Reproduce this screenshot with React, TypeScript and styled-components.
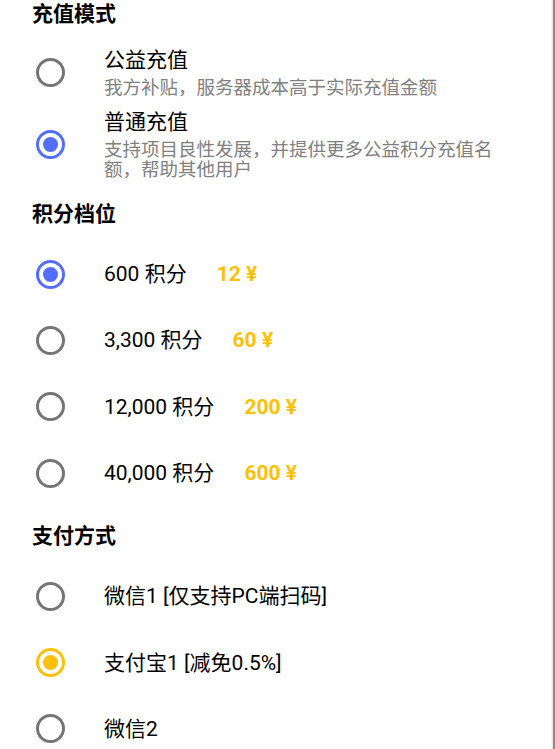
import React, { useState } from 'react';
import styled, { createGlobalStyle } from 'styled-components';

const COLORS = {
  TEXT: '#000000',
  SUB: '#808080',
  RADIO_OFF: '#757575',
  INDIGO: '#536dfe',
  AMBER: '#ffc107',
};

const GlobalStyle = createGlobalStyle`
  html, body {
    margin: 0;
    padding: 0;
    background: #ffffff;
  }
  body {
    font-family: Roboto, "Noto Sans CJK SC", sans-serif;
    color: ${COLORS.TEXT};
  }
`;

const Page = styled.div`
  box-sizing: border-box;
  width: 555px;
  min-height: 749px;
  padding: 0 0 0 32px;
  border-right: 2px solid #8c8c8c;
  box-shadow: inset -3px 0 2px -2px rgba(0, 0, 0, 0.12);
  overflow: hidden;
`;

const Section = styled.section`
  & + & {
    margin-top: 16px;
  }
`;

const Heading = styled.h2`
  margin: 0 0 13px;
  font-size: 21px;
  line-height: 28px;
  font-weight: 700;
`;

const ModeList = styled.div`
  display: flex;
  flex-direction: column;
  gap: 3px;
  padding: 2px 0 0;
`;

const Option = styled.label<{ $tall?: boolean }>`
  display: flex;
  align-items: center;
  gap: 36px;
  min-height: ${(p) => (p.$tall ? '66.3px' : '0')};
  padding: ${(p) => (p.$tall ? '0' : '4px 0')};
  cursor: pointer;
`;

const RadioBox = styled.span`
  flex: none;
  display: flex;
  align-items: center;
  justify-content: center;
  width: 36px;
  height: 36px;
`;

const RadioRing = styled.span<{ $checked: boolean; $color: string }>`
  position: relative;
  box-sizing: border-box;
  width: 29px;
  height: 29px;
  border-radius: 50%;
  border: 3px solid ${(p) => (p.$checked ? p.$color : COLORS.RADIO_OFF)};

  &::after {
    content: '';
    position: absolute;
    left: 4px;
    top: 4px;
    width: 15px;
    height: 15px;
    border-radius: 50%;
    background: ${(p) => p.$color};
    display: ${(p) => (p.$checked ? 'block' : 'none')};
  }
`;

const TextBlock = styled.div`
  display: flex;
  flex-direction: column;
  width: 400px;
`;

const Label = styled.span`
  font-size: 21px;
  line-height: 26px;
`;

const Sub = styled.span`
  margin-top: 5px;
  font-size: 18.5px;
  line-height: 20px;
  color: ${COLORS.SUB};
`;

const Price = styled.span`
  margin-left: 30px;
  font-size: 21px;
  font-weight: 700;
  color: ${COLORS.AMBER};
`;

const Radio = ({ checked, color }: { checked: boolean; color: string }) => (
  <RadioBox>
    <RadioRing $checked={checked} $color={color} />
  </RadioBox>
);

const modes = [
  { id: 'charity', title: '公益充值', desc: '我方补贴，服务器成本高于实际充值金额' },
  {
    id: 'normal',
    title: '普通充值',
    desc: '支持项目良性发展，并提供更多公益积分充值名额，帮助其他用户',
  },
];

const tiers = [
  { points: '600', price: '12' },
  { points: '3,300', price: '60' },
  { points: '12,000', price: '200' },
  { points: '40,000', price: '600' },
];

const payments = ['微信1 [仅支持PC端扫码]', '支付宝1 [减免0.5%]', '微信2'];

export default function App() {
  const [mode, setMode] = useState('normal');
  const [tier, setTier] = useState(0);
  const [pay, setPay] = useState(1);

  return (
    <>
      <GlobalStyle />
      <Page>
        <Section>
          <Heading>充值模式</Heading>
          <ModeList>
            {modes.map((m) => (
              <Option key={m.id} onClick={() => setMode(m.id)}>
                <Radio checked={mode === m.id} color={COLORS.INDIGO} />
                <TextBlock>
                  <Label>{m.title}</Label>
                  <Sub>{m.desc}</Sub>
                </TextBlock>
              </Option>
            ))}
          </ModeList>
        </Section>

        <Section>
          <Heading>积分档位</Heading>
          {tiers.map((t, i) => (
            <Option key={t.points} $tall onClick={() => setTier(i)}>
              <Radio checked={tier === i} color={COLORS.INDIGO} />
              <Label>
                {t.points} 积分
                <Price>{t.price} ¥</Price>
              </Label>
            </Option>
          ))}
        </Section>

        <Section>
          <Heading>支付方式</Heading>
          {payments.map((p, i) => (
            <Option key={p} $tall onClick={() => setPay(i)}>
              <Radio checked={pay === i} color={COLORS.AMBER} />
              <Label>{p}</Label>
            </Option>
          ))}
        </Section>
      </Page>
    </>
  );
}
